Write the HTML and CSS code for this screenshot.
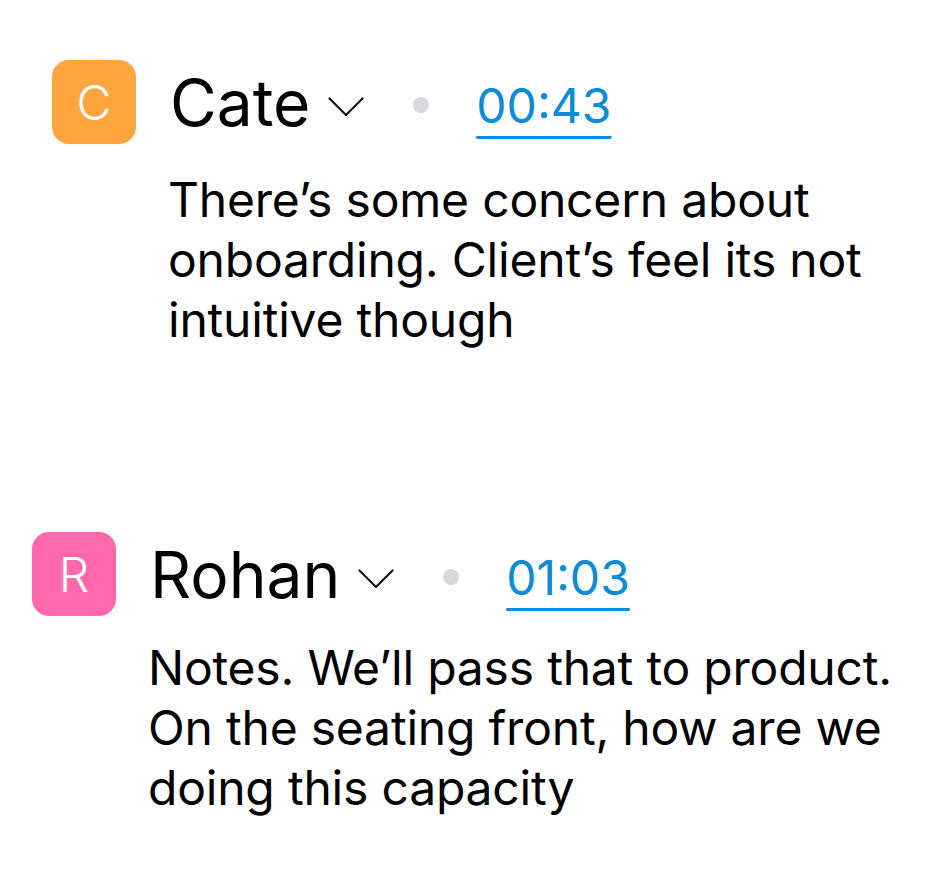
FILE: index.html
```html
<!DOCTYPE html>
<html lang="en">
<head>
    <meta charset="UTF-8">
    <title>Transcript</title>
    <link rel="stylesheet" href="styles.css">
</head>
<body>
    <div class="transcript">
        <!-- Cate -->
        <div class="entry entry-cate">
            <div class="avatar avatar-orange">C</div>
            <div class="entry-head">
                <span class="speaker">Cate</span>
                <svg class="chevron" width="36" height="20" viewBox="0 0 36 20">
                    <path d="M1.5 1.5 L18 18 L34.5 1.5" fill="none" stroke="#111" stroke-width="2.2" stroke-linecap="round" stroke-linejoin="round"/>
                </svg>
                <span class="dot"></span>
                <a class="timestamp" href="#">00:43</a>
            </div>
            <p class="entry-text">There’s some concern about onboarding. Client’s feel its not intuitive though</p>
        </div>

        <!-- Rohan -->
        <div class="entry entry-rohan">
            <div class="avatar avatar-pink">R</div>
            <div class="entry-head">
                <span class="speaker">Rohan</span>
                <svg class="chevron" width="36" height="20" viewBox="0 0 36 20">
                    <path d="M1.5 1.5 L18 18 L34.5 1.5" fill="none" stroke="#111" stroke-width="2.2" stroke-linecap="round" stroke-linejoin="round"/>
                </svg>
                <span class="dot"></span>
                <a class="timestamp" href="#">01:03</a>
            </div>
            <p class="entry-text">Notes. We’ll pass that to product. On the seating front, how are we doing this capacity</p>
        </div>
    </div>
</body>
</html>
```

FILE: styles.css
```css
body {
    margin: 0;
    background-color: #fff;
    font-family: Inter, "Noto Sans", sans-serif;
    color: #000;
}

.transcript {
    padding-top: 60px;
}

.entry {
    display: grid;
    grid-template-columns: 84px 1fr;
    column-gap: 34px;
    row-gap: 26px;
}

.entry-cate {
    padding-left: 52px;
}

.entry-rohan {
    padding-left: 32px;
    margin-top: 182px;
    row-gap: 22px;
}

.avatar {
    width: 84px;
    height: 84px;
    border-radius: 17px;
    display: flex;
    align-items: center;
    justify-content: center;
    color: #fff;
    font-size: 48px;
    font-weight: 300;
}

.avatar-orange {
    background-color: #ffa53d;
}

.avatar-pink {
    background-color: #ff69ab;
}

.entry-head {
    display: flex;
    align-items: center;
}

.speaker {
    font-size: 64px;
    line-height: 1;
    margin-right: 18px;
    margin-top: 2px;
}

.chevron {
    display: block;
    margin-top: 10px;
}

.dot {
    width: 16px;
    height: 16px;
    border-radius: 50%;
    background-color: #d9d8de;
    margin-left: 49px;
    margin-right: 47px;
    margin-top: 6px;
}

.timestamp {
    font-size: 48px;
    color: #0a8cd6;
    text-decoration: underline;
    text-decoration-thickness: 3px;
    text-underline-offset: 13px;
    margin-top: 6px;
}

.entry-text {
    grid-column: 2;
    margin: 0 0 0 -2px;
    font-size: 48px;
    line-height: 60px;
    letter-spacing: -0.2px;
}
```
